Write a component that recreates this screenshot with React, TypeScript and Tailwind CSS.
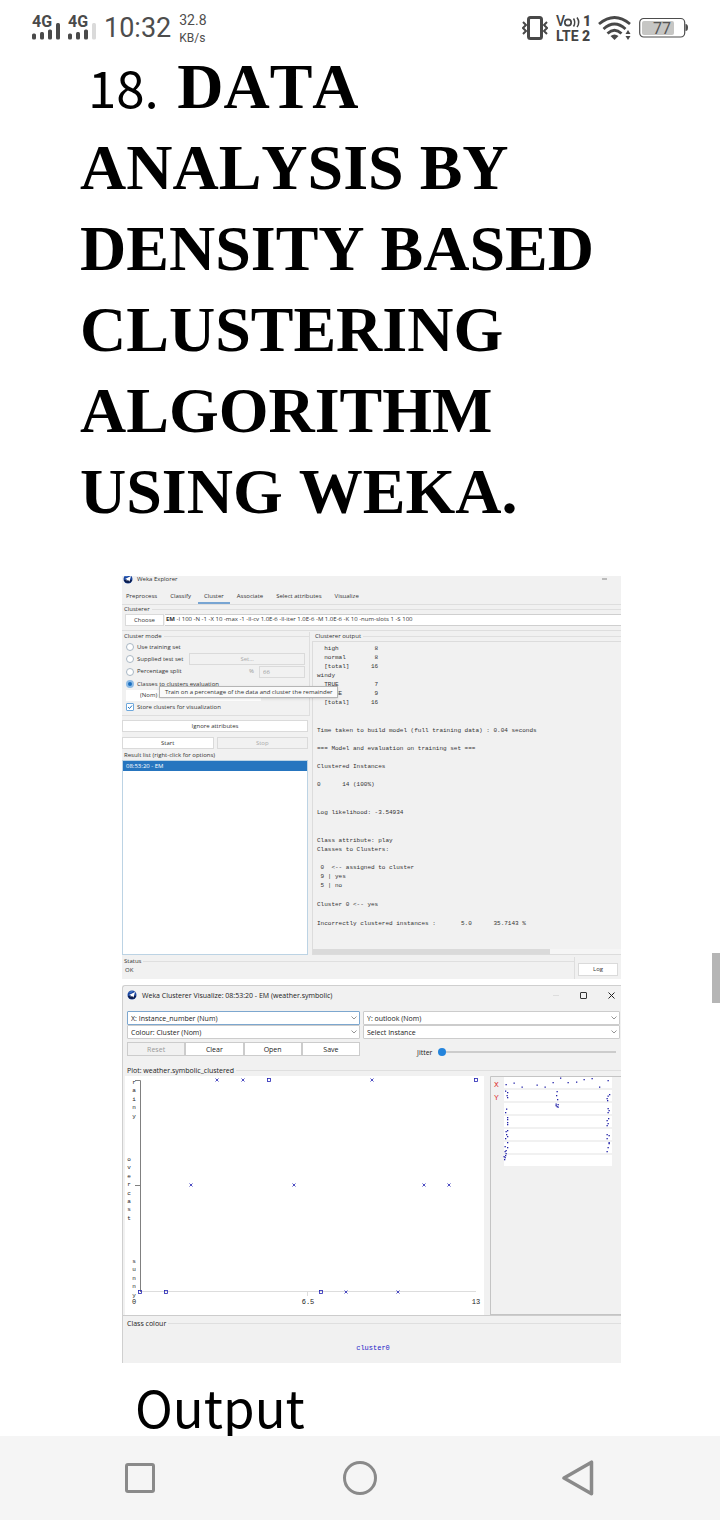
import type { ReactNode } from "react";

const sansFont = "font-['Open_Sans','Noto_Sans',sans-serif]";
const monoFont = "font-['Liberation_Mono',monospace]";

function WekaLogo() {
  return (
    <svg viewBox="0 0 20 20" className="size-[10px] shrink-0" aria-hidden="true">
      <circle cx="10" cy="10" r="9" fill="#1c47a0" />
      <path d="M1.500 12 A9 9 0 0 0 18.500 12 L12 11 Z" fill="#0c1d4d" />
      <path d="M4 10 L16 4 L13 15 L10 12 L7 14 L8 11 Z" fill="#fff" />
      <path d="M4 6 A8 8 0 0 1 12 2 L9 5 Z" fill="#4f86d6" />
    </svg>
  );
}

function SignalBars({ weak }: { weak?: boolean }) {
  return (
    <svg viewBox="0 0 28 26" className="h-[26px] w-7 overflow-visible">
      <text x="0" y="12" fontSize="16" fontWeight="700" fill="#4a4a4a" fontFamily="Roboto, sans-serif">4G</text>
      <rect x="0" y="18.500" width="4" height="6" rx="1.500" fill="#4a4a4a" />
      <rect x="8" y="17" width="4" height="7.500" rx="1.500" fill="#4a4a4a" />
      <rect x="16" y="14.500" width="4" height="10" rx="1.500" fill="#4a4a4a" />
      <rect x="24" y="8" width="4" height="16.500" rx="1.500" fill={weak ? "#dadada" : "#4a4a4a"} />
    </svg>
  );
}

function StatusBar() {
  return (
    <header className="flex h-[46px] shrink-0 items-center justify-between px-8 pt-[10px] font-[Roboto,sans-serif] text-[#4d4d4d]">
      <div className="flex items-center gap-2">
        <SignalBars />
        <SignalBars weak />
        <time className="text-[27px] leading-7">10:32</time>
        <div className="flex flex-col pt-px text-[14px] leading-[18px]">
          <span>32.8</span>
          <span className="text-[12px]">KB/s</span>
        </div>
      </div>
      <div className="flex items-center gap-[7px]">
        <svg viewBox="0 0 26 26" className="size-[26px]" fill="none" stroke="#484848">
          <rect x="6.500" y="2.500" width="13" height="21" rx="2" strokeWidth="3" />
          <path d="M1 7 L4 10 L1 13 L4 16 L1 19 M25 7 L22 10 L25 13 L22 16 L25 19" strokeWidth="2" />
        </svg>
        <svg viewBox="0 0 36 28" className="h-7 w-9 overflow-visible" fill="#444" fontFamily="Roboto, sans-serif">
          <text x="1" y="12" fontSize="14" fontWeight="500">V</text>
          <circle cx="13" cy="8.500" r="3.200" fill="none" stroke="#444" strokeWidth="1.700" />
          <path d="M18.500 4.500 Q21 8.500 18.500 12.500 M22 3.500 Q25.500 8.500 22 13" fill="none" stroke="#444" strokeWidth="1.500" />
          <text x="28" y="12" fontSize="14" fontWeight="900">1</text>
          <text x="1" y="27" fontSize="14" fontWeight="700">LTE</text>
          <text x="27" y="27" fontSize="14" fontWeight="900">2</text>
        </svg>
        <svg viewBox="0 0 34 26" className="h-[26px] w-[34px]" fill="none" stroke="#484848" strokeWidth="2.800">
          <path d="M1 9 Q16.500 -4 32 9" />
          <path d="M5.500 14 Q16.500 4 27.500 14" />
          <path d="M9.500 18.500 Q16.500 12 23.500 18.500" />
          <path d="M12.500 21 Q16.500 18 20.500 21 L16.500 25 Z" fill="#484848" stroke="none" />
          <path d="M27.500 19 L30 15 L32.500 19 Z M27.500 21 L30 25 L32.500 21 Z" fill="#484848" stroke="none" />
        </svg>
        <svg viewBox="0 0 49 22" className="h-[22px] w-[49px]">
          <rect x="0.700" y="1.500" width="45" height="18.500" rx="4" fill="#fff" stroke="#4d4d4d" strokeWidth="1.200" />
          <rect x="3" y="4" width="32" height="14" rx="2" fill="#c6c6c4" />
          <path d="M46.500 7 Q49 7 49 10.500 Q49 14 46.500 14 Z" fill="#4d4d4d" />
          <text x="14" y="16.500" fontSize="16" fill="#555" fontFamily="Roboto, sans-serif">77</text>
        </svg>
      </div>
    </header>
  );
}

/** Caption sitting on a thin rule, as on a titled border. */
function Caption({ children, large }: { children: ReactNode; large?: boolean }) {
  return (
    <div className="flex items-center gap-[2px] pl-[2px]">
      <h3 className={large ? "text-[7px] leading-[9px]" : "text-[6px] leading-[9px]"}>{children}</h3>
      <span className="h-px flex-1 bg-[#dfdfdf]" />
    </div>
  );
}

const tabs = ["Preprocess", "Classify", "Cluster", "Associate", "Select attributes", "Visualize"];

const radioClass =
  "size-2 shrink-0 appearance-none rounded-full border border-[#a9b7c4] bg-white checked:border-2 checked:border-[#8dbbe6] checked:bg-[#1a6fc0]";

function RadioRow({ label, checked, children }: { label: string; checked?: boolean; children?: ReactNode }) {
  return (
    <div className="flex h-[12px] items-center">
      <label className="flex shrink-0 items-center gap-[3px] whitespace-nowrap">
        <input type="radio" name="cluster-mode" defaultChecked={checked} className={radioClass} />
        {label}
      </label>
      {children}
    </div>
  );
}

function ClusterMode() {
  return (
    <section className="relative border-r border-b border-[#dedede] pb-[2px]">
      <Caption>Cluster mode</Caption>
      <div className="flex flex-col pl-1">
        <RadioRow label="Use training set" />
        <RadioRow label="Supplied test set">
          <button disabled className="mr-1 ml-[6px] h-[12px] flex-1 border border-[#dadada] text-[#aaa]">Set...</button>
        </RadioRow>
        <div className="flex h-[13px] items-center pr-1">
          <label className="flex items-center gap-[3px]">
            <input type="radio" name="cluster-mode" className={radioClass} />
            Percentage split
          </label>
          <label htmlFor="split" className="ml-auto pr-[5px] text-[#999]">%</label>
          <input id="split" disabled defaultValue="66" className="h-[12px] w-[46px] border border-[#dadada] px-[3px] text-[#999]" />
        </div>
        <RadioRow label="Classes to clusters evaluation" checked />
        <select aria-label="Class attribute" className="h-[11px] w-[135px] appearance-none bg-white pl-[14px]">
          <option>(Nom) play</option>
        </select>
        <label className="flex h-[12px] items-center gap-[3px]">
          <span className="relative flex size-2">
            <input type="checkbox" defaultChecked className="size-2 appearance-none rounded-[1px] border border-[#6ea8dc] bg-white" />
            <svg viewBox="0 0 8 8" className="pointer-events-none absolute inset-0" fill="none" stroke="#1e74c4" strokeWidth="1">
              <path d="M2 4 L3.500 5.500 L6 2.500" />
            </svg>
          </span>
          Store clusters for visualization
        </label>
      </div>
      <div role="tooltip" className="absolute top-[54px] left-[37px] z-10 border border-[#b5b5b5] bg-[#fafafa] px-[5px] leading-[10px] whitespace-nowrap shadow-sm">
        Train on a percentage of the data and cluster the remainder
      </div>
    </section>
  );
}

const lightButton = "border border-[#dadada] bg-white text-center";

const outputBlocks = [
  { gap: "mt-0", text: "  high          8\n  normal        8\n  [total]      16\nwindy\n  TRUE          7\n  FALSE         9\n  [total]      16" },
  { gap: "mt-[19px]", text: "Time taken to build model (full training data) : 0.04 seconds" },
  { gap: "mt-[9px]", text: "=== Model and evaluation on training set ===" },
  { gap: "mt-[9px]", text: "Clustered Instances" },
  { gap: "mt-[9px]", text: "0      14 (100%)" },
  { gap: "mt-[19px]", text: "Log likelihood: -3.54934" },
  { gap: "mt-[19px]", text: "Class attribute: play\nClasses to Clusters:" },
  { gap: "mt-[9px]", text: " 0  <-- assigned to cluster\n 9 | yes\n 5 | no" },
  { gap: "mt-[10px]", text: "Cluster 0 <-- yes" },
  { gap: "mt-[10px]", text: "Incorrectly clustered instances :       5.0      35.7143 %" },
];

function ExplorerWindow() {
  return (
    <section className={`flex flex-col overflow-hidden bg-[#f1f1f1] text-[6px] leading-[9px] text-[#333] ${sansFont}`}>
      <div className="flex h-[9px] items-start justify-between pr-[14px] pl-[1px]">
        <div className="-mt-[2px] flex items-center gap-1">
          <WekaLogo />
          <h2>Weka Explorer</h2>
        </div>
        <span className="mt-[2px] h-[2px] w-[5px] bg-[#bbb]" />
      </div>
      <nav className="mt-[3px] flex h-[17px] gap-px border-b border-[#dedede]">
        {tabs.map((tab) => (
          <button
            key={tab}
            className={
              tab === "Cluster"
                ? "border-b-2 border-[#78a5d3] px-[6px] pt-[2px] whitespace-nowrap"
                : "border-b-2 border-transparent px-[6px] pt-[2px] whitespace-nowrap first:pl-1"
            }
          >
            {tab}
          </button>
        ))}
      </nav>
      <Caption>Clusterer</Caption>
      <div className="flex h-[12px] pl-[3px]">
        <button className={`w-[39px] ${lightButton}`}>Choose</button>
        <div className="ml-px flex-1 border-y border-[#cfcfcf] bg-white pl-px whitespace-nowrap">
          <b>EM</b> -I 100 -N -1 -X 10 -max -1 -ll-cv 1.0E-6 -ll-iter 1.0E-6 -M 1.0E-6 -K 10 -num-slots 1 -S 100
        </div>
      </div>
      <div className="mt-[4px] mb-px h-px bg-[#dedede]" />
      <div className="grid grid-cols-[188fr_311fr]">
        <div className="flex flex-col">
          <ClusterMode />
          <div className="flex flex-1 flex-col pr-[2px]">
            <button className={`mt-[4px] h-[12px] ${lightButton}`}>Ignore attributes</button>
            <div className="mt-[5px] grid h-[12px] grid-cols-2 gap-[3px]">
              <button className={lightButton}>Start</button>
              <button disabled className="border border-[#dadada] text-[#aaa]">Stop</button>
            </div>
            <h3 className="mt-[2px] pl-[2px]">Result list (right-click for options)</h3>
            <ul className="flex-1 border border-[#bcd3e4] bg-white">
              <li className="bg-[#2675bf] pl-[3px] leading-[10px] text-white">08:53:20 - EM</li>
            </ul>
          </div>
        </div>
        <div className="flex flex-col">
          <div className="pl-[3px]">
            <Caption>Clusterer output</Caption>
          </div>
          <div className="ml-[2px] flex flex-1 flex-col border-t border-b border-l border-[#dcdcdc]">
            <div className={`min-w-0 flex-1 overflow-hidden pt-[2px] pl-[4px] ${monoFont}`}>
              {outputBlocks.map((block) => (
                <pre key={block.text} className={`${block.gap} font-[inherit] leading-[9px]`}>
                  {block.text}
                </pre>
              ))}
            </div>
            <div className="mt-[21px] h-[5px] bg-[#f5f5f5]">
              <div className="h-full w-[77%] bg-[#dadada]" />
            </div>
          </div>
        </div>
      </div>
      <div className="mt-[2px] flex h-[22px]">
        <div className="flex-1 border-r border-[#dedede]">
          <Caption>Status</Caption>
          <p className="pl-[3px]">OK</p>
        </div>
        <button className={`mx-[3px] mt-[6px] h-[13px] w-[40px] ${lightButton}`}>Log</button>
      </div>
    </section>
  );
}

function Combo({ label, value, active }: { label: string; value: string; active?: boolean }) {
  return (
    <div className="relative">
      <select
        aria-label={label}
        className={
          active
            ? "block h-[14px] w-full appearance-none rounded-[1px] border border-[#7da7cf] bg-white pl-[3px]"
            : "block h-[14px] w-full appearance-none rounded-[1px] border border-[#ccc] bg-white pl-[3px]"
        }
      >
        <option>{value}</option>
      </select>
      <svg viewBox="0 0 6 4" className="pointer-events-none absolute top-[5px] right-[3px] h-1 w-[6px]" fill="none" stroke="#888" strokeWidth="0.900">
        <path d="M0.500 0.500 L3 3 L5.500 0.500" />
      </svg>
    </div>
  );
}

const yLabels = [
  { x: 9, y: 8, word: "rainy" },
  { x: 4, y: 85, word: "overcast" },
  { x: 9, y: 187, word: "sunny" },
];
const crosses = [[92, 4], [118, 4], [247, 4], [66, 109], [169, 109], [299, 109], [324, 109], [221, 216], [273, 216]];
const squares = [[144, 4], [351, 4], [15, 216], [41, 216], [196, 216]];

function ScatterPlot() {
  return (
    <svg viewBox="0 0 359 239" className="block w-full bg-white" fontFamily="'Liberation Mono', monospace" fontSize="7" fill="#222">
      <path d="M10 4.500 H15.500 V216 M10 109.500 H15.500" fill="none" stroke="#808080" />
      <path d="M16 215.500 H351 M182.500 216 V220" fill="none" stroke="#ddd" />
      {yLabels.map((label) =>
        label.word.split("").map((letter, i) => (
          <text key={label.word + i} x={label.x} y={label.y + Math.round(i * 8.4)} textAnchor="middle" fontSize="6">
            {letter}
          </text>
        )),
      )}
      <text x="9" y="228" textAnchor="middle">0</text>
      <text x="183" y="228" textAnchor="middle">6.5</text>
      <text x="351" y="228" textAnchor="middle">13</text>
      {crosses.map(([x, y]) => (
        <path key={`${x}-${y}`} d={`M${x - 1.5} ${y - 1.5} l3 3 m0 -3 l-3 3`} stroke="#2222b4" strokeWidth="0.800" />
      ))}
      {squares.map(([x, y]) => (
        <rect key={`${x}-${y}`} x={x - 1.5} y={y - 1.5} width="3" height="3" fill="none" stroke="#2222b4" strokeWidth="0.800" />
      ))}
    </svg>
  );
}

const stripTops = [1, 14, 27, 40, 53, 66, 79];
const stripDots = [
  [16, 8], [24, 6.5], [32, 10.5], [47, 8.5], [55, 10.5], [63, 6], [70.5, 1.5], [78, 6], [86.5, 5.5], [94, 3], [102, 2], [109.5, 10.5], [118, 4],
  [15.5, 14.5], [17.5, 16], [17, 19], [17.5, 21], [67, 15], [66.5, 19], [67.5, 23], [119.5, 18], [118, 19.5], [117, 22], [117.5, 24],
  [66, 27.5], [68, 28], [67, 30], [66, 29], [68, 30.5],
  [16.5, 32.5], [15.5, 36], [118, 32], [119, 34], [118, 36],
  [17.5, 41], [17.5, 43], [17.5, 46], [17.5, 48], [118.5, 42], [117, 44], [118, 47], [117, 49],
  [16, 55], [17.5, 54], [16.5, 58], [17.5, 60], [15.5, 62], [117, 58], [119, 59], [117, 62],
  [17.5, 66], [15, 70], [17.5, 71], [16, 74], [15, 75], [119, 66], [118, 71], [119, 67], [117, 75],
  [16, 77], [14, 80], [15, 81], [14.5, 83], [15.5, 79],
];

function AttributeStrips() {
  return (
    <svg viewBox="0 0 131 239" className="block w-full" fontFamily="'Liberation Mono', monospace" fontSize="8">
      <path d="M0.500 238 V0.500 H131" fill="none" stroke="#c4c4c4" />
      <path d="M0 238.500 H131" stroke="#c4c4c4" />
      <text x="4" y="11" fill="#d33">X</text>
      <text x="4" y="24" fill="#d33">Y</text>
      {stripTops.map((top) => (
        <rect key={top} x="14" y={top} width="108" height="11" fill="#fff" />
      ))}
      {stripDots.map(([x, y], i) => (
        <rect key={i} x={x - 0.5} y={y} width="1.300" height="1.300" fill="#2222a8" />
      ))}
    </svg>
  );
}

function VisualizeWindow() {
  return (
    <section className={`flex flex-col overflow-hidden rounded-tl-[3px] border-t border-l border-[#cfcfcf] bg-[#f1f1f1] text-[7px] leading-[9px] text-[#222] ${sansFont}`}>
      <div className="flex h-[18px] items-center justify-between pr-[6px] pl-1">
        <div className="flex items-center gap-[5px]">
          <WekaLogo />
          <h2>Weka Clusterer Visualize: 08:53:20 - EM (weather.symbolic)</h2>
        </div>
        <div className="flex items-center gap-[21px]">
          <button aria-label="Minimize" className="h-px w-[6px] bg-[#ddd]" />
          <button aria-label="Maximize" className="size-[7px] rounded-[1px] border border-[#333]" />
          <button aria-label="Close" className="size-[7px]">
            <svg viewBox="0 0 7 7" className="size-[7px]" stroke="#222" strokeWidth="1">
              <path d="M0.500 0.500 L6.500 6.500 M6.500 0.500 L0.500 6.500" />
            </svg>
          </button>
        </div>
      </div>
      <div className="mt-[7px] grid grid-cols-[233fr_257fr] gap-x-[3px] pr-[1px] pl-1">
        <Combo label="X axis" value="X: Instance_number (Num)" active />
        <Combo label="Y axis" value="Y: outlook (Nom)" />
        <Combo label="Colour" value="Colour: Cluster (Nom)" />
        <Combo label="Selection shape" value="Select Instance" />
        <div className="mt-[3px] grid h-[14px] grid-cols-4">
          <button disabled className="border border-[#ccc] text-[#999]">Reset</button>
          <button className="border border-[#ccc] bg-white">Clear</button>
          <button className="border border-[#ccc] bg-white">Open</button>
          <button className="border border-[#ccc] bg-white">Save</button>
        </div>
        <label className="mt-[6px] flex h-[14px] items-center gap-[6px] pr-1 pl-[54px]">
          Jitter
          <input
            type="range"
            defaultValue={0}
            className="h-2 min-w-0 flex-1 appearance-none bg-transparent [&::-webkit-slider-runnable-track]:h-[2px] [&::-webkit-slider-runnable-track]:bg-[#ccc] [&::-webkit-slider-thumb]:-mt-[3px] [&::-webkit-slider-thumb]:size-2 [&::-webkit-slider-thumb]:appearance-none [&::-webkit-slider-thumb]:rounded-full [&::-webkit-slider-thumb]:bg-[#2484dc]"
          />
        </label>
      </div>
      <div className="mt-[7px] pl-[2px]">
        <Caption large>Plot: weather.symbolic_clustered</Caption>
      </div>
      <div className="mt-px grid grid-cols-[359fr_131fr] items-start gap-x-[6px] border-b border-[#ccc] pl-[2px]">
        <ScatterPlot />
        <AttributeStrips />
      </div>
      <div className="mt-[3px] pl-[2px]">
        <Caption large>Class colour</Caption>
      </div>
      <p className={`h-[35px] pt-4 pl-[2px] text-center text-[#2222c8] ${monoFont}`}>cluster0</p>
    </section>
  );
}

function NavigationBar() {
  return (
    <nav className="grid h-[84px] shrink-0 grid-cols-[280fr_160fr_280fr] items-center bg-[#f5f5f5]">
      <button aria-label="Recent apps" className="flex justify-center">
        <span className="size-[30px] rounded-[3px] border-3 border-[#8a8a8a]" />
      </button>
      <button aria-label="Home" className="flex justify-center">
        <span className="size-[34px] rounded-full border-3 border-[#8a8a8a]" />
      </button>
      <button aria-label="Back" className="flex justify-center">
        <svg viewBox="0 0 36 38" className="h-[38px] w-9" fill="none" stroke="#8a8a8a" strokeWidth="3.500" strokeLinejoin="round">
          <path d="M2 19 L29.500 3.200 V34.800 Z" />
        </svg>
      </button>
    </nav>
  );
}

export default function App() {
  return (
    <div className="relative flex h-screen flex-col overflow-hidden bg-white text-black">
      <StatusBar />
      <main className="min-h-0 flex-1 overflow-hidden">
        <h1 className="pr-16 pl-20 font-['Liberation_Serif',serif] text-[64px] leading-[81px] font-bold [font-kerning:none]">
          <span className="mr-[7px] pl-2 font-['Noto_Sans_CJK_SC',sans-serif] text-[51px] leading-none font-normal">18. </span>
          DATA
          <br />
          ANALYSIS BY
          <br />
          DENSITY BASED
          <br />
          CLUSTERING
          <br />
          ALGORITHM
          <br />
          USING WEKA.
        </h1>
        <div className="mt-11 mr-[99px] ml-[122px] flex flex-col gap-[6px]">
          <ExplorerWindow />
          <VisualizeWindow />
        </div>
        <p className="mt-[11px] pl-[135px] font-['Noto_Sans_CJK_SC',sans-serif] text-[51px] leading-[64px]">Output</p>
      </main>
      <NavigationBar />
      <div className="absolute top-[953px] right-0 h-[50px] w-2 bg-[#b5b5b5]" />
    </div>
  );
}
